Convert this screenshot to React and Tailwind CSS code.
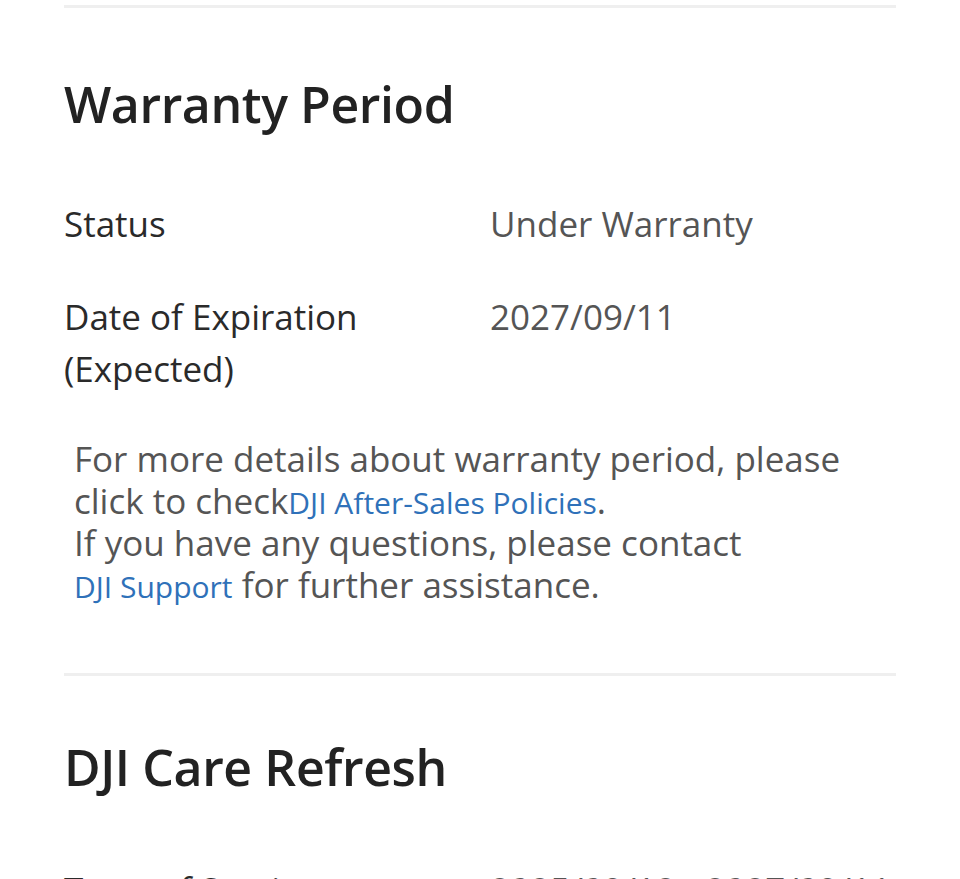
import React from "react";

function InfoRow({ label, value }) {
  return (
    <div className="flex">
      <div className="w-[426px] shrink-0 pr-6 text-[#2a2a2a] leading-[52px]">{label}</div>
      <div className="flex-1 text-[#555] leading-[52px]">{value}</div>
    </div>
  );
}

export default function App() {
  return (
    <div className="w-[960px] h-[879px] overflow-hidden bg-white font-['Open_Sans',sans-serif]">
      <div className="px-16 pt-[5px]">
        {/* Warranty */}
        <section className="border-t-[3px] border-[#efefef]">
          <h2 className="pt-[66px] text-[50px] leading-[60px] font-semibold text-[#222] tracking-[-0.4px]">
            Warranty Period
          </h2>

          <div className="mt-[64px] flex flex-col gap-[41px] text-[35px]">
            <InfoRow label="Status" value="Under Warranty" />
            <InfoRow label="Date of Expiration (Expected)" value="2027/09/11" />
          </div>

          <p className="mt-[43px] px-[10px] text-[35px] leading-[42px] text-[#555]">
            For more details about warranty period, please click to check
            <a className="text-[30px] leading-none text-[#2f71b9] whitespace-nowrap">DJI After-Sales Policies</a>.
            <br />
            If you have any questions, please contact{" "}
            <a className="text-[30px] leading-none text-[#2f71b9] whitespace-nowrap">DJI Support</a> for further assistance.
          </p>
        </section>

        {/* Care Refresh */}
        <section className="mt-[67px] border-t-[3px] border-[#efefef]">
          <h2 className="pt-[61px] text-[50px] leading-[60px] font-semibold text-[#222] tracking-[-0.4px]">
            DJI Care Refresh
          </h2>

          <div className="mt-[67px] flex flex-col text-[35px]">
            <InfoRow label="Term of Service" value="2025/09/12 - 2027/09/11" />
          </div>
        </section>
      </div>
    </div>
  );
}
